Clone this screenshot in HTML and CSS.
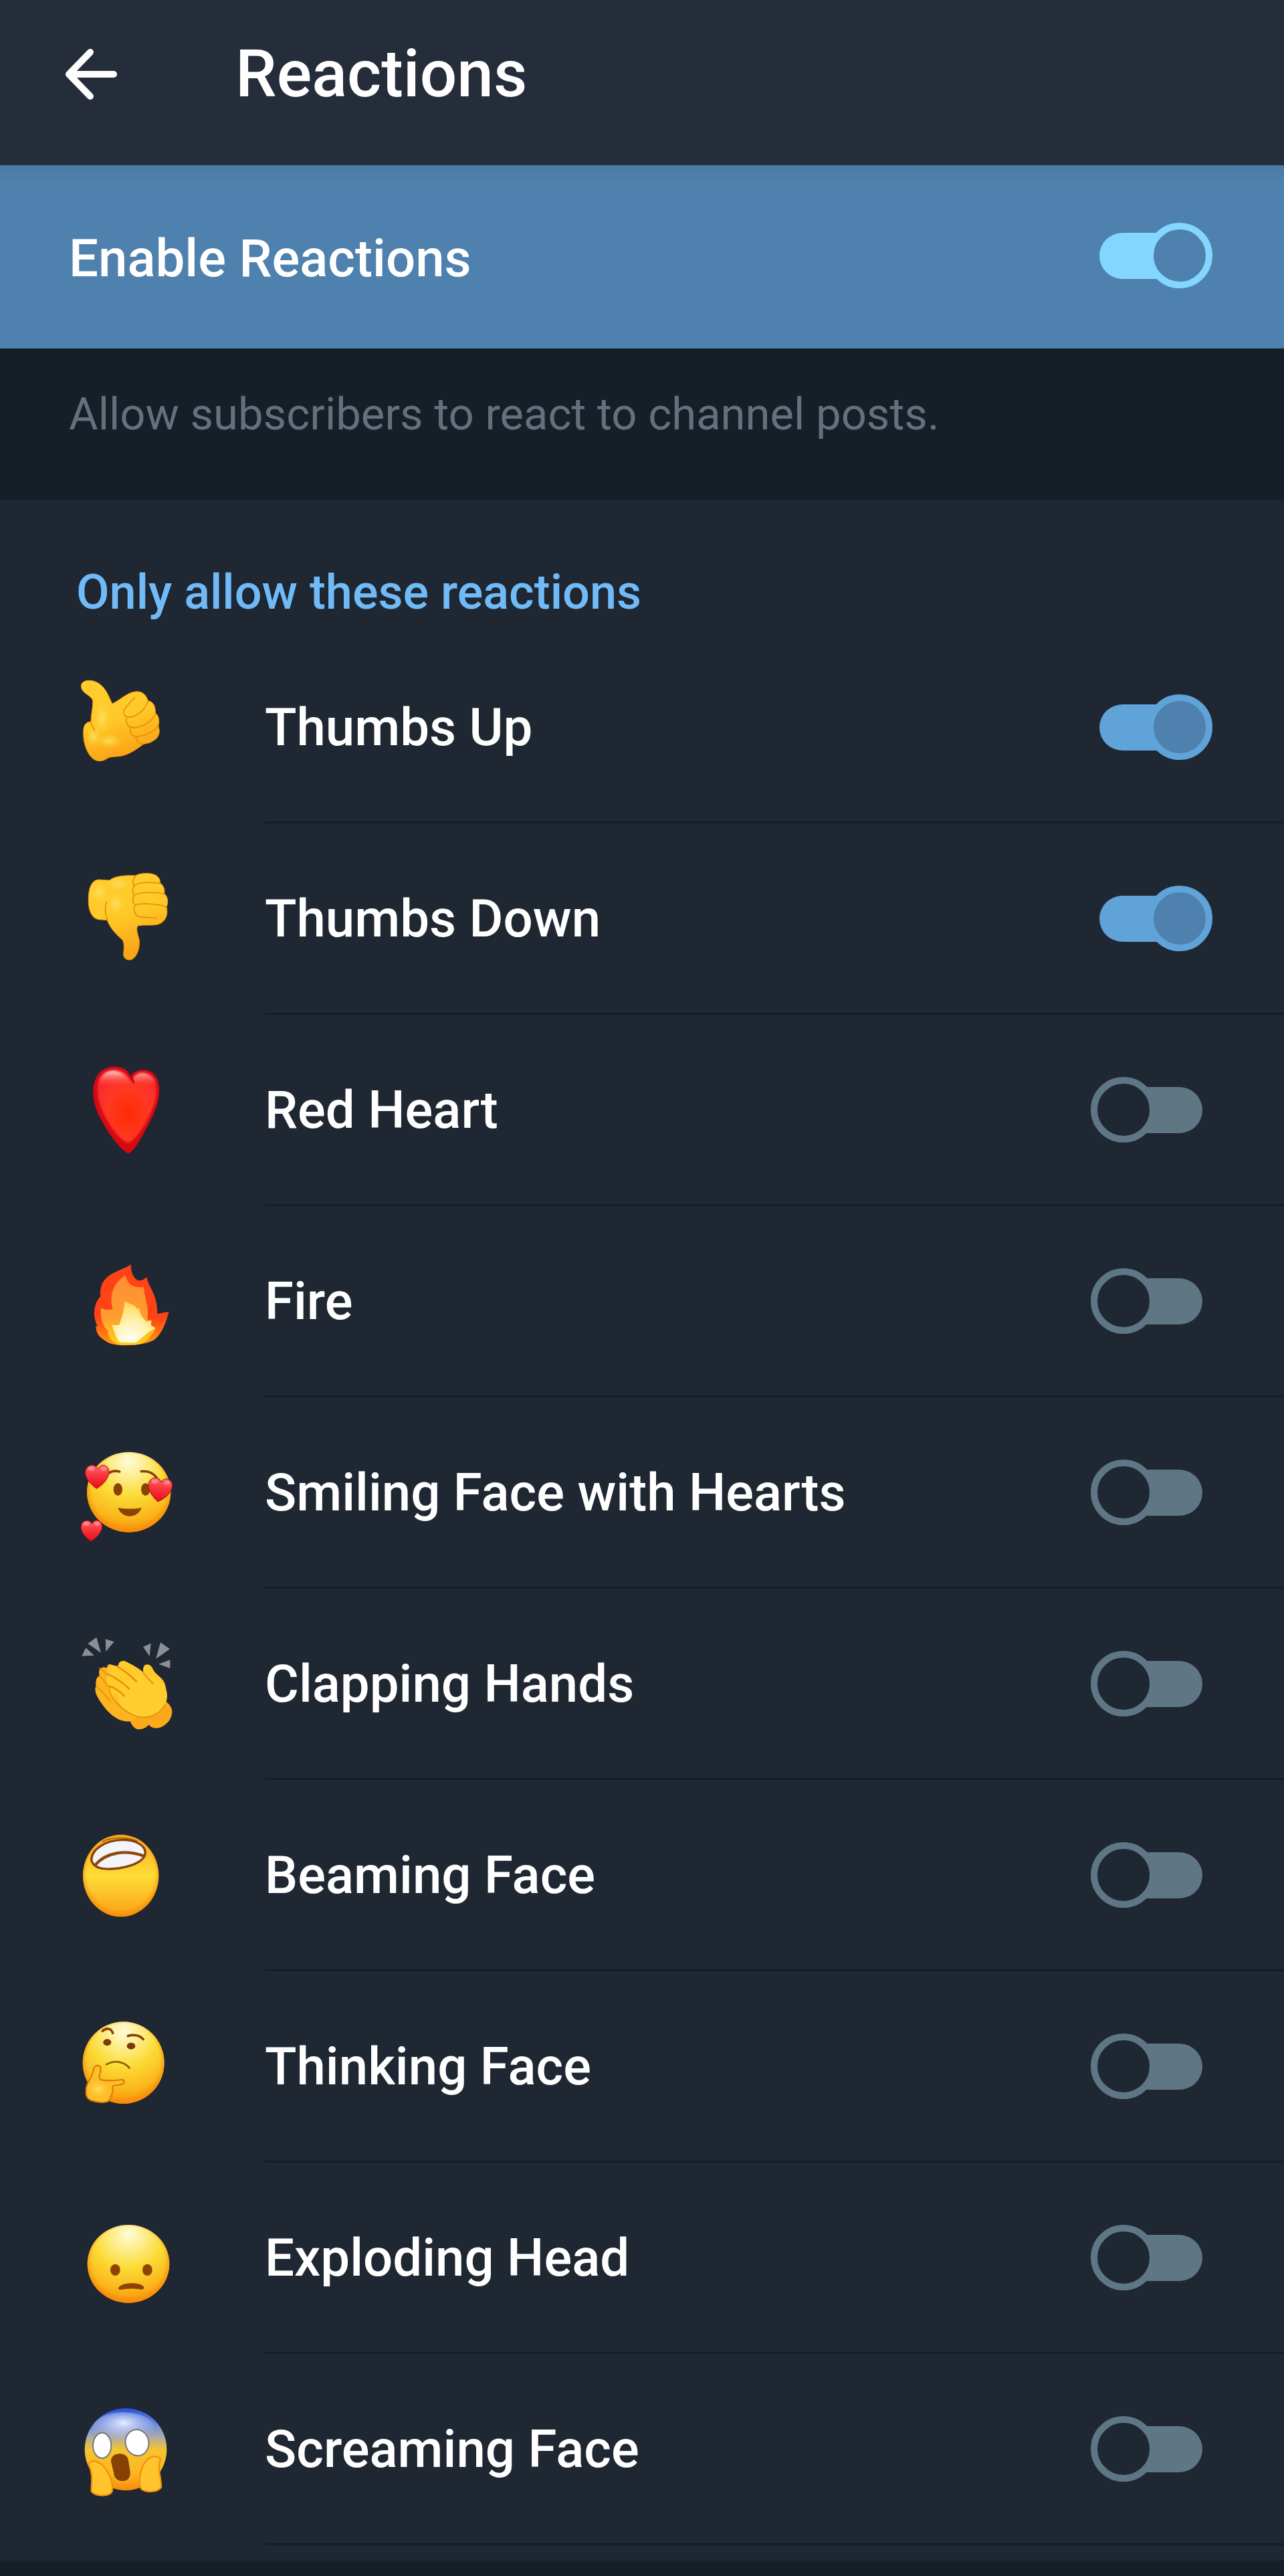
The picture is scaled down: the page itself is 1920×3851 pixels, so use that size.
FILE: index.html
```html
<!DOCTYPE html>
<html lang="en">
<head>
<meta charset="utf-8">
<meta name="viewport" content="width=device-width, initial-scale=1">
<title>Reactions</title>
<link rel="stylesheet" href="styles.css">
</head>
<body>
<svg class="defs" aria-hidden="true">
  <defs>
    <radialGradient id="face" cx="0.5" cy="0.12" r="0.9">
      <stop offset="0" stop-color="#fffbd8"/><stop offset="0.22" stop-color="#fdee8e"/><stop offset="0.48" stop-color="#fbdb35"/><stop offset="0.8" stop-color="#fab51a"/><stop offset="1" stop-color="#f98a08"/>
    </radialGradient>
    <radialGradient id="rim" cx="0.5" cy="0.47" r="0.53">
      <stop offset="0.84" stop-color="#f98a08" stop-opacity="0"/><stop offset="1" stop-color="#f98a08" stop-opacity="0.9"/>
    </radialGradient>
    <linearGradient id="hand" x1="0" y1="0" x2="0.3" y2="1">
      <stop offset="0" stop-color="#ffce2f"/><stop offset="0.55" stop-color="#ffc927"/><stop offset="1" stop-color="#fba416"/>
    </linearGradient>
    <radialGradient id="palm" cx="0.5" cy="0.5" r="0.5">
      <stop offset="0" stop-color="#ffdc62"/><stop offset="1" stop-color="#ffd23a" stop-opacity="0"/>
    </radialGradient>
    <linearGradient id="love" x1="0" y1="0" x2="0" y2="1">
      <stop offset="0" stop-color="#ff6b72"/><stop offset="0.35" stop-color="#fb3d45"/><stop offset="1" stop-color="#e60d14"/>
    </linearGradient>
    <symbol id="mini-heart" viewBox="0 0 110 112" overflow="visible">
      <path d="M52 110C25 92 2 64 1 38C0 14 20 0 38 4C48 6 54 14 58 20C64 8 76 -1 90 4C106 10 114 28 107 48C99 74 78 95 52 110Z" fill="url(#love)" stroke="#b30d19" stroke-width="3"/>
      <ellipse cx="28" cy="20" rx="15" ry="10" fill="#ff9a9c" opacity="0.7"/>
      <ellipse cx="85" cy="20" rx="13" ry="9" fill="#ff9a9c" opacity="0.7"/>
    </symbol>
  </defs>
</svg>

<header class="topbar">
  <button class="back" type="button" aria-label="Back">
    <svg viewBox="0 0 78 76" aria-hidden="true"><path d="M37 5L5 38L37 71M5 38H72"/></svg>
  </button>
  <h1 class="title">Reactions</h1>
</header>

<main>
  <div class="enable">
    <label class="enable-label" for="enable">Enable Reactions</label>
    <input class="switch switch-bright" type="checkbox" role="switch" id="enable" checked>
  </div>
  <p class="note">Allow subscribers to react to channel posts.</p>

  <section class="panel">
    <h2 class="panel-title">Only allow these reactions</h2>
    <ul class="list">
      <li class="row">
        <svg class="emoji" viewBox="0 21 600 540" aria-hidden="true">
          <path d="M94 105C94 84 115 77 137 79C175 83 200 112 216 145L233 183C257 174 281 150 312 136C346 121 381 126 394 170C413 172 429 190 427 225C442 235 447 260 440 283C451 310 442 337 418 349C402 363 381 359 368 368C340 390 310 408 281 416C249 423 226 416 201 434C180 445 158 440 143 426C122 405 104 366 104 315C103 282 113 264 138 264C137 230 149 200 146 167C133 140 97 139 94 105Z" fill="url(#hand)" stroke="#f2970d" stroke-width="3"/>
          <ellipse cx="188" cy="245" rx="38" ry="78" fill="url(#palm)"/>
          <ellipse cx="220" cy="350" rx="60" ry="32" fill="url(#palm)"/>
          <ellipse cx="150" cy="330" rx="36" ry="48" fill="url(#palm)"/>
          <path d="M334 155C312 182 286 200 284 220C286 246 310 249 338 236C366 222 384 204 394 172M297 249C294 280 310 294 338 290C378 283 410 263 428 229M315 293C312 323 328 333 350 330C389 324 421 308 440 284M340 334C343 352 350 361 371 364M138 266C143 283 148 289 154 304" class="crease"/>
        </svg>
        <div class="row-body"><label class="row-label" for="r1">Thumbs Up</label><input class="switch" type="checkbox" role="switch" id="r1" checked></div>
      </li>
      <li class="row">
        <svg class="emoji" viewBox="0 9 600 540" aria-hidden="true">
          <path d="M127 178C129 130 148 101 174 102L222 105C245 86 286 82 338 84C360 70 426 68 441 93C448 101 448 108 448 117C464 128 470 146 467 164C482 177 487 203 477 224C485 257 475 290 441 302C412 310 375 303 348 309C340 323 346 340 354 370C360 408 344 449 321 460C304 467 282 456 284 434C287 408 288 389 280 373C255 350 226 325 211 284C187 280 166 287 148 268C130 248 125 216 127 178Z" fill="url(#hand)" stroke="#ef980e" stroke-width="3"/>
          <ellipse cx="172" cy="158" rx="44" ry="50" fill="url(#palm)"/>
          <ellipse cx="250" cy="210" rx="46" ry="50" fill="url(#palm)"/>
          <ellipse cx="262" cy="120" rx="54" ry="32" fill="url(#palm)"/>
          <path d="M338 86C325 101 323 119 332 130C324 145 323 162 332 172C323 190 324 205 337 215C326 235 333 258 350 267C378 276 413 267 434 276M332 130C350 110 420 113 448 119M332 172C354 155 443 158 467 167M337 215C364 207 455 210 476 226M209 203C198 222 201 250 212 284" class="crease"/>
        </svg>
        <div class="row-body"><label class="row-label" for="r2">Thumbs Down</label><input class="switch" type="checkbox" role="switch" id="r2" checked></div>
      </li>
      <li class="row">
        <svg class="emoji" viewBox="0 -3 600 540" aria-hidden="true">
          <defs>
            <radialGradient id="heart-fill" cx="0.52" cy="0.6" r="0.62"><stop offset="0" stop-color="#ff2b00"/><stop offset="0.6" stop-color="#ff3826"/><stop offset="1" stop-color="#f92a2d"/></radialGradient>
            <linearGradient id="heart-shine" x1="0" y1="0" x2="0" y2="1"><stop offset="0" stop-color="#ffd6cf"/><stop offset="1" stop-color="#ff4034" stop-opacity="0"/></linearGradient>
            <filter id="soften" x="-10%" y="-10%" width="120%" height="120%"><feGaussianBlur stdDeviation="4"/></filter>
          </defs>
          <path d="M306 460C270 447 210 362 176 295C141 225 140 156 166 112C194 64 269 58 304 93L319 110C343 77 403 75 429 115C455 158 447 222 418 286C386 351 337 452 306 460Z" fill="#d60812"/>
          <path d="M304 412C263 396 222 338 192 275C163 213 160 145 183 115C208 77 271 76 301 110L326 144C321 120 341 96 371 97C418 99 439 151 430 206C418 265 350 404 304 412Z" fill="url(#heart-fill)" filter="url(#soften)"/>
          <path d="M171 160C174 78 270 60 314 139L314 150ZM322 137C335 80 421 89 433 157Z" fill="url(#heart-shine)" filter="url(#soften)"/>
          <path d="M305 97C316 108 323 122 330 142" fill="none" stroke="#8d0715" stroke-width="6" stroke-linecap="round"/>
        </svg>
        <div class="row-body"><label class="row-label" for="r3">Red Heart</label><input class="switch" type="checkbox" role="switch" id="r3"></div>
      </li>
      <li class="row">
        <svg class="emoji" viewBox="0 -12 600 540" aria-hidden="true">
          <defs>
            <linearGradient id="fire-out" x1="0" y1="0" x2="0" y2="1"><stop offset="0.65" stop-color="#ff4315"/><stop offset="1" stop-color="#ff9a14"/></linearGradient>
            <linearGradient id="fire-mid" x1="0" y1="0" x2="0" y2="1"><stop offset="0" stop-color="#ff8d34"/><stop offset="0.6" stop-color="#ff9d2e"/><stop offset="1" stop-color="#ffd21a"/></linearGradient>
            <radialGradient id="fire-in" cx="0.42" cy="0.9" r="0.85"><stop offset="0" stop-color="#fffef0"/><stop offset="0.5" stop-color="#fff2ae"/><stop offset="1" stop-color="#ffd95a"/></radialGradient>
          </defs>
          <path d="M317 90C316 128 331 153 349 163C367 164 381 155 388 146C396 196 437 222 436 312L487 303C477 350 454 405 421 430C372 458 246 463 208 437C179 419 160 405 160 367L168 368C149 333 143 274 181 234C173 167 218 139 245 127C274 110 301 105 317 90Z" fill="url(#fire-out)"/>
          <path d="M293 139C300 176 321 197 375 193C379 249 400 280 391 340L410 342L408 364L429 376C409 418 384 446 341 451H272C234 443 211 417 214 387C193 373 178 336 183 286C202 297 221 295 236 292C221 240 229 181 293 139Z" fill="url(#fire-mid)"/>
          <path d="M290 255C310 270 336 268 342 289L355 289C357 313 369 331 387 348L408 343L407 363L426 377C388 395 365 424 340 441H270C246 420 245 389 231 363H264C280 324 286 294 290 255Z" fill="url(#fire-in)"/>
        </svg>
        <div class="row-body"><label class="row-label" for="r4">Fire</label><input class="switch" type="checkbox" role="switch" id="r4"></div>
      </li>
      <li class="row">
        <svg class="emoji" viewBox="0 6 600 540" aria-hidden="true">
          <ellipse cx="308" cy="272" rx="188" ry="180" fill="url(#face)"/>
          <ellipse cx="308" cy="272" rx="188" ry="180" fill="url(#rim)"/>
          <ellipse cx="259" cy="260" rx="20" ry="28" fill="#8a4305"/>
          <ellipse cx="383" cy="260" rx="20" ry="28" fill="#8a4305"/>
          <path d="M217 188C232 176 250 176 266 180M364 179C392 176 416 185 432 206" class="brow"/>
          <path d="M259 342C290 348 335 348 366 342C356 366 336 380 312 380C288 380 268 366 259 342Z" fill="#8a4305"/>
          <use href="#mini-heart" x="111" y="148" width="110" height="110"/>
          <use href="#mini-heart" transform="rotate(6 447 262)" x="392" y="207" width="110" height="110"/>
          <use href="#mini-heart" x="92" y="397" width="97" height="97"/>
        </svg>
        <div class="row-body"><label class="row-label" for="r5">Smiling Face with Hearts</label><input class="switch" type="checkbox" role="switch" id="r5"></div>
      </li>
      <li class="row">
        <svg class="emoji" viewBox="0 24 600 540" aria-hidden="true">
          <path d="M97 167L115 130L153 165ZM124 111L163 83L183 153ZM203 91L242 103L205 147ZM372 126L407 110L401 168ZM450 106L492 136L429 180ZM441 203L493 184V222Z" fill="#8b8e92"/>
          <path d="M312 455C322 482 337 497 356 496C379 494 395 483 402 465L380 425ZM381 448C394 485 419 495 443 489C482 478 507 440 501 407C496 389 484 379 473 370Z" fill="#fba81b"/>
          <path d="M174 240C176 217 193 215 211 220C208 202 225 199 240 211L380 420L316 460C265 465 223 430 195 392C166 354 150 325 160 302C159 276 162 261 176 257Z" fill="#fdb41e"/>
          <path d="M174 258C196 268 199 285 212 303M163 304C184 322 202 342 224 369M176 222C190 227 199 239 210 254" class="crease"/>
          <path d="M213 247C207 223 219 207 240 209L260 212C260 192 280 183 300 194C327 208 354 222 372 239C371 216 376 205 391 205C411 207 413 223 423 238C446 264 465 268 473 303C481 346 480 385 452 415C424 443 386 450 353 441C307 430 249 386 222 337C213 320 213 309 220 303C208 291 205 267 213 247Z" fill="url(#hand)"/>
          <ellipse cx="370" cy="345" rx="110" ry="95" fill="#ffcd2d"/>
          <path d="M220 307C218 350 271 405 323 430C380 455 440 440 470 385M371 240C386 257 398 275 418 291" class="crease"/>
          <path d="M258 215C284 231 314 251 342 282M213 247C245 264 278 282 309 314M220 302C244 309 265 323 287 346" fill="none" stroke="#e88a0b" stroke-width="7" stroke-linecap="round"/>
        </svg>
        <div class="row-body"><label class="row-label" for="r6">Clapping Hands</label><input class="switch" type="checkbox" role="switch" id="r6"></div>
      </li>
      <li class="row">
        <svg class="emoji" viewBox="0 -18 600 540" aria-hidden="true">
          <defs><linearGradient id="beam" x1="0" y1="0" x2="0" y2="1"><stop offset="0" stop-color="#f6a51c"/><stop offset="0.5" stop-color="#ffdd36"/><stop offset="1" stop-color="#fba016"/></linearGradient></defs>
          <ellipse cx="272" cy="252" rx="170" ry="184" fill="url(#beam)"/>
          <ellipse cx="272" cy="252" rx="170" ry="184" fill="url(#rim)"/>
          <path d="M140 182C140 132 205 95 272 92C330 88 376 112 382 145C384 186 326 209 262 219C210 226 150 226 140 182Z" fill="#f3f3f8" stroke="#85420b" stroke-width="10"/>
          <path d="M156 205C207 147 290 134 375 164" fill="none" stroke="#8c480d" stroke-width="13"/>
          <path d="M188 100C230 80 300 76 348 98" fill="none" stroke="#9c5e15" stroke-width="5"/>
        </svg>
        <div class="row-body"><label class="row-label" for="r7">Beaming Face</label><input class="switch" type="checkbox" role="switch" id="r7"></div>
      </li>
      <li class="row">
        <svg class="emoji" viewBox="0 3 600 540" aria-hidden="true">
          <ellipse cx="284" cy="254" rx="183" ry="184" fill="url(#face)"/>
          <ellipse cx="284" cy="254" rx="183" ry="184" fill="url(#rim)"/>
          <ellipse cx="211" cy="163" rx="18" ry="15" fill="#7b3a06"/>
          <ellipse cx="318" cy="179" rx="19" ry="15" fill="#7b3a06"/>
          <path d="M190 112C207 96 228 98 236 121M304 134C327 126 357 130 372 149" class="brow"/>
          <path d="M207 262C243 241 286 248 311 278" fill="none" stroke="#8f5b08" stroke-width="8" stroke-linecap="round"/>
          <path d="M148 292C149 273 158 265 169 266C184 269 185 282 179 300C174 316 173 326 184 331C214 338 247 334 274 330C289 328 292 344 278 350L236 358C228 366 242 374 234 385C236 399 221 404 224 416C218 436 178 435 149 426C120 420 114 398 116 379C113 347 138 334 148 292Z" fill="#ffbd29" stroke="#d7790b" stroke-width="6"/>
          <ellipse cx="172" cy="372" rx="44" ry="36" fill="url(#palm)"/>
        </svg>
        <div class="row-body"><label class="row-label" for="r8">Thinking Face</label><input class="switch" type="checkbox" role="switch" id="r8"></div>
      </li>
      <li class="row">
        <svg class="emoji" viewBox="0 -39 600 540" aria-hidden="true">
          <ellipse cx="306" cy="256" rx="184" ry="175" fill="url(#face)"/>
          <ellipse cx="306" cy="256" rx="184" ry="175" fill="url(#rim)"/>
          <ellipse cx="247" cy="283" rx="22" ry="26" fill="#8e4305"/>
          <ellipse cx="391" cy="283" rx="22" ry="26" fill="#8e4305"/>
          <path d="M261 365C275 337 361 336 376 361C376 369 370 373 362 371C330 366 305 367 276 371C267 373 261 371 261 365Z" fill="#8e4305"/>
        </svg>
        <div class="row-body"><label class="row-label" for="r9">Exploding Head</label><input class="switch" type="checkbox" role="switch" id="r9"></div>
      </li>
      <li class="row">
        <svg class="emoji" viewBox="0 -21 600 540" aria-hidden="true">
          <defs>
            <linearGradient id="scream" x1="0" y1="0" x2="0" y2="1"><stop offset="0" stop-color="#2b52dc"/><stop offset="0.2" stop-color="#6f8bdc"/><stop offset="0.34" stop-color="#a7a8b0"/><stop offset="0.5" stop-color="#f5c432"/><stop offset="0.8" stop-color="#fdb51d"/><stop offset="1" stop-color="#f88b0a"/></linearGradient>
            <radialGradient id="chill" cx="0.5" cy="0.35" r="0.6"><stop offset="0" stop-color="#e6edff"/><stop offset="1" stop-color="#b6c6f2" stop-opacity="0"/></radialGradient>
          </defs>
          <ellipse cx="294" cy="248" rx="184" ry="184" fill="url(#scream)"/>
          <ellipse cx="284" cy="150" rx="138" ry="68" fill="url(#chill)"/>
          <ellipse cx="188" cy="231" rx="41" ry="57" fill="#fff" stroke="#77777a" stroke-width="6"/>
          <ellipse cx="345" cy="218" rx="52" ry="59" fill="#fff" stroke="#77777a" stroke-width="6" transform="rotate(-12 345 218)"/>
          <path d="M226 301C227 256 302 253 308 299L316 350C321 404 244 408 238 354Z" fill="#874103" stroke="#ffcd44" stroke-width="3"/>
          <path d="M127 315C140 288 181 300 207 340C231 378 240 417 231 441C211 461 157 459 140 436C139 402 151 360 127 315ZM450 290C424 267 387 284 370 325C353 366 352 406 365 427C386 442 436 442 453 418C454 380 434 335 450 290Z" fill="#ffc42b" stroke="#f2930f" stroke-width="7"/>
        </svg>
        <div class="row-body"><label class="row-label" for="r10">Screaming Face</label><input class="switch" type="checkbox" role="switch" id="r10"></div>
      </li>
    </ul>
  </section>
</main>
</body>
</html>
```
FILE: styles.css
```css
*, *::before { box-sizing: border-box; }

body {
  margin: 0;
  padding-bottom: 23px;
  background: #161e27;
  color: #fff;
  font-family: Roboto, "Liberation Sans", sans-serif;
  font-weight: 500;
}

h1, h2, p, ul { margin: 0; padding: 0; }

.defs { display: block; width: 0; height: 0; }

.topbar {
  display: flex;
  align-items: center;
  gap: 176px;
  height: 247px;
  padding: 0 98px 26px;
  background: #252d3a;
}

.back {
  flex: none;
  width: 78px;
  height: 76px;
  padding: 0;
  border: 0;
  background: none;
}

.back svg {
  display: block;
  width: 100%;
  height: 100%;
  fill: none;
  stroke: #fff;
  stroke-width: 10;
  stroke-linecap: round;
  stroke-linejoin: round;
}

.title {
  font-size: 98px;
  line-height: 112px;
  font-weight: 500;
}

.enable {
  display: flex;
  align-items: center;
  justify-content: space-between;
  height: 274px;
  padding: 0 122px 4px 103px;
  background: linear-gradient(#4a7aa4, #4e81ad 24px);
}

.enable-label, .row-label {
  font-size: 78px;
  line-height: 92px;
}

.enable-label { padding-top: 10px; }

.note {
  height: 226px;
  padding: 56px 103px 0;
  color: #66707c;
  font-size: 67px;
  line-height: 84px;
  font-weight: 400;
}

.panel {
  padding: 97px 0 23px;
  background: #1e2732;
}

.panel-title {
  padding: 0 114px 17px;
  color: #70baf8;
  font-size: 72px;
  line-height: 84px;
  font-weight: 500;
}

.list { list-style: none; }

.row {
  display: flex;
  align-items: stretch;
  gap: 106px;
  height: 286px;
  padding-left: 90px;
}

.emoji {
  flex: none;
  align-self: center;
  width: 200px;
  height: 180px;
  overflow: visible;
}

.row-body {
  flex: 1;
  display: flex;
  align-items: center;
  justify-content: space-between;
  padding: 2px 122px 0 0;
  border-bottom: 3px solid #161d27;
}

.switch {
  appearance: none;
  position: relative;
  flex: none;
  width: 154px;
  height: 69px;
  margin: 0;
  border-radius: 35px;
  background: #5f7685;
}

.switch::before {
  content: "";
  position: absolute;
  top: -15px;
  left: -13px;
  width: 98px;
  height: 98px;
  border: 10px solid #5f7685;
  border-radius: 50%;
  background: #1e2732;
}

.switch:checked { background: #60a3d9; }

.switch:checked::before {
  left: 71px;
  border-color: #60a3d9;
  background: #4e81ad;
}

.switch-bright:checked { background: #82d6ff; }

.switch-bright:checked::before { border-color: #82d6ff; }

.crease {
  fill: none;
  stroke: #e2900c;
  stroke-width: 5;
  stroke-linecap: round;
  stroke-linejoin: round;
}

.brow {
  fill: none;
  stroke: #8a4305;
  stroke-width: 11;
  stroke-linecap: round;
}
```
